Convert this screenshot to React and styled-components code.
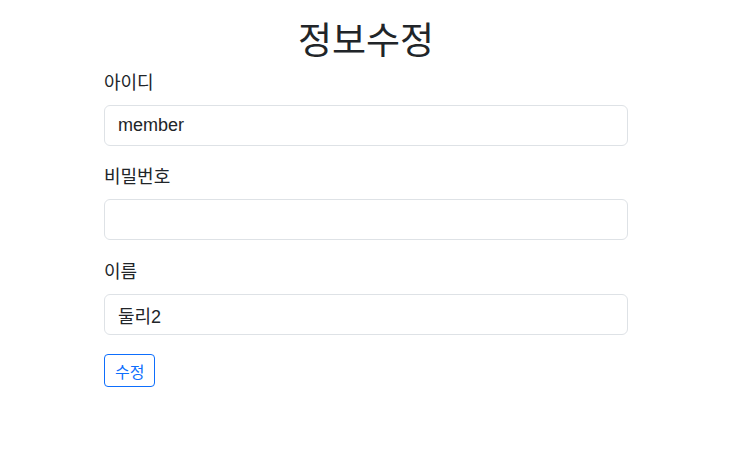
import React, { useState } from "react";
import styled, { createGlobalStyle } from "styled-components";

const GlobalStyle = createGlobalStyle`
  * { box-sizing: border-box; }
  body {
    margin: 0;
    background: #fff;
    color: #212529;
    font-family: "Noto Sans CJK KR", "Noto Sans", "Liberation Sans", sans-serif;
  }
`;

const Page = styled.div`
  width: 732px;
  display: flex;
  flex-direction: column;
  align-items: center;
`;

const Title = styled.h1`
  margin: 14px 0 6px;
  font-size: 37px;
  font-weight: 400;
  line-height: 48px;
  color: #212529;
`;

const Form = styled.form`
  width: 524px;
  display: flex;
  flex-direction: column;
`;

const Group = styled.div`
  display: flex;
  flex-direction: column;
  margin-bottom: ${(p) => p.$gap || 16}px;
`;

const Label = styled.label`
  font-size: 18px;
  line-height: 27px;
  margin-bottom: 10px;
  color: #212529;
`;

const Input = styled.input`
  height: 41px;
  padding: 0 13px;
  border: 1px solid #dee2e6;
  border-radius: 6px;
  font-family: "Liberation Sans", "Noto Sans CJK KR", sans-serif;
  font-size: 18px;
  color: #212529;
  outline: none;
`;

const Button = styled.button`
  align-self: flex-start;
  margin-top: 3px;
  height: 33px;
  padding: 0 10px;
  border: 1px solid #0d6efd;
  border-radius: 4px;
  background: #fff;
  color: #0d6efd;
  font-family: "Noto Sans CJK KR", sans-serif;
  font-size: 16px;
  cursor: pointer;
`;

export default function App() {
  const [form, setForm] = useState({ id: "member", pw: "", name: "둘리2" });
  const set = (key) => (e) => setForm({ ...form, [key]: e.target.value });

  return (
    <Page>
      <GlobalStyle />
      <Title>정보수정</Title>
      <Form onSubmit={(e) => e.preventDefault()}>
        <Group>
          <Label>아이디</Label>
          <Input value={form.id} onChange={set("id")} readOnly />
        </Group>
        <Group $gap={17}>
          <Label>비밀번호</Label>
          <Input type="password" value={form.pw} onChange={set("pw")} />
        </Group>
        <Group>
          <Label>이름</Label>
          <Input value={form.name} onChange={set("name")} />
        </Group>
        <Button type="submit">수정</Button>
      </Form>
    </Page>
  );
}
